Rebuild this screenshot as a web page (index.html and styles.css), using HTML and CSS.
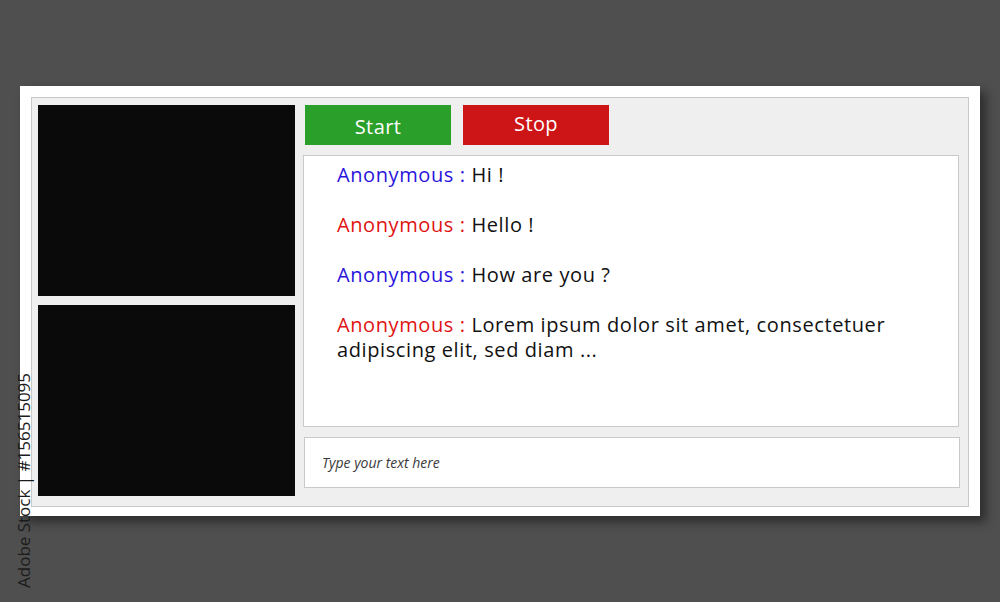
FILE: index.html
```html
<!DOCTYPE html>
<html lang="en">
<head>
    <meta charset="UTF-8">
    <meta name="viewport" content="width=device-width, initial-scale=1.0">
    <title>Video Chat</title>
    <link rel="stylesheet" href="styles.css">
</head>
<body>
    <div class="card">
        <div class="panel">
            <!-- Video feeds -->
            <div class="videos">
                <div class="video"></div>
                <div class="video"></div>
            </div>

            <!-- Controls and chat -->
            <div class="chat-side">
                <div class="controls">
                    <button class="btn start">Start</button>
                    <button class="btn stop">Stop</button>
                </div>

                <div class="chat-box">
                    <p class="message"><span class="name blue">Anonymous :</span> <span class="text">Hi !</span></p>
                    <p class="message"><span class="name red">Anonymous :</span> <span class="text">Hello !</span></p>
                    <p class="message"><span class="name blue">Anonymous :</span> <span class="text">How are you ?</span></p>
                    <p class="message"><span class="name red">Anonymous :</span> <span class="text">Lorem ipsum dolor sit amet, consectetuer adipiscing elit, sed diam ...</span></p>
                </div>

                <div class="message-input">
                    <input type="text" placeholder="Type your text here">
                </div>
            </div>
        </div>
    </div>

    <div class="credit">Adobe Stock | #156515095</div>
</body>
</html>
```

FILE: styles.css
```css
body, html {
    margin: 0;
    padding: 0;
}

body {
    background-color: #4f4f4f;
    font-family: "Open Sans", Lato, sans-serif;
    height: 602px;
    overflow: hidden;
    position: relative;
}

.card {
    margin: 86px 0 0 20px;
    width: 960px;
    height: 430px;
    box-sizing: border-box;
    padding: 11px 11px 9px 11px;
    background-color: #ffffff;
    box-shadow: 6px 6px 10px rgba(0, 0, 0, 0.45);
}

.panel {
    display: flex;
    gap: 8px;
    height: 100%;
    box-sizing: border-box;
    padding: 7px 9px 10px 6px;
    background-color: #efefef;
    border: 1px solid #c9c9c9;
}

.videos {
    width: 257px;
    display: flex;
    flex-direction: column;
    gap: 9px;
}

.video {
    height: 191px;
    background-color: #0a0a0a;
}

.chat-side {
    flex: 1;
    display: flex;
    flex-direction: column;
}

.controls {
    display: flex;
    gap: 12px;
    margin-left: 2px;
    margin-bottom: 10px;
}

.btn {
    width: 146px;
    height: 40px;
    border: none;
    color: #ffffff;
    font-family: inherit;
    font-size: 20px;
    letter-spacing: 0.4px;
    padding: 0;
}

.btn.start {
    background-color: #2a9f2a;
    padding-top: 2px;
}

.btn.stop {
    background-color: #cd1416;
    padding-bottom: 4px;
}

.chat-box {
    height: 272px;
    box-sizing: border-box;
    padding: 6px 40px 0 33px;
    background-color: #ffffff;
    border: 1px solid #c9c9c9;
    font-size: 20px;
    line-height: 25px;
    letter-spacing: 0.6px;
    color: #111111;
}

.message {
    margin: 0 0 25px;
}

.name.blue {
    color: #2a14dc;
}

.name.red {
    color: #e01212;
}

.message-input {
    margin-top: 10px;
    margin-left: 1px;
    margin-right: -1px;
}

.message-input input {
    width: 100%;
    height: 51px;
    box-sizing: border-box;
    padding: 0 17px;
    border: 1px solid #c9c9c9;
    background-color: #ffffff;
    font-family: "Open Sans", sans-serif;
    font-style: italic;
    font-size: 14px;
    outline: none;
}

.message-input input::placeholder {
    color: #3a3a3a;
}

.credit {
    position: absolute;
    left: 12px;
    top: 368px;
    height: 220px;
    writing-mode: vertical-rl;
    transform: rotate(180deg);
    font-family: "Open Sans", sans-serif;
    font-size: 17px;
    color: #1c1c1c;
    white-space: nowrap;
}
```
